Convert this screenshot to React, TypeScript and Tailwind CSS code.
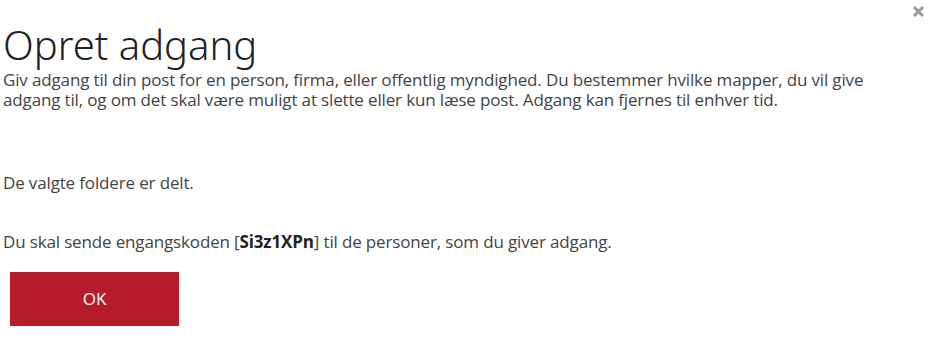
export default function App() {
  return (
    <div className="relative w-[935px] h-[339px] bg-white font-['Open_Sans',sans-serif] text-[#444]">
      {/* close */}
      <button className="absolute left-[912px] top-[5px] w-[13px] h-[13px] text-[#999]">
        <svg viewBox="0 0 13 13" className="w-[13px] h-[13px]" fill="none" stroke="currentColor" strokeWidth={3}>
          <path d="M2 2l9 9M11 2l-9 9" />
        </svg>
      </button>

      <div className="pl-[3px] pt-[25px]">
        <h1 className="text-[40px] leading-[40px] font-light text-[#222] font-['Noto_Sans',sans-serif]">Opret adgang</h1>
        <p className="mt-[5px] w-[880px] text-[17px] leading-[20px] tracking-[-0.15px]">
          Giv adgang til din post for en person, firma, eller offentlig myndighed. Du bestemmer hvilke mapper, du vil give
          adgang til, og om det skal være muligt at slette eller kun læse post. Adgang kan fjernes til enhver tid.
        </p>

        <p className="mt-[63px] text-[17px] leading-[20px] tracking-[-0.15px]">De valgte foldere er delt.</p>
        <p className="mt-[39px] text-[17px] leading-[20px] tracking-[-0.15px]">
          Du skal sende engangskoden [<span className="font-bold text-[#222]">Si3z1XPn</span>] til de personer, som du giver adgang.
        </p>

        <button className="mt-[20px] ml-[7px] w-[169px] h-[54px] bg-[#b81c2c] text-white text-[17px] flex items-center justify-center">
          OK
        </button>
      </div>
    </div>
  )
}
